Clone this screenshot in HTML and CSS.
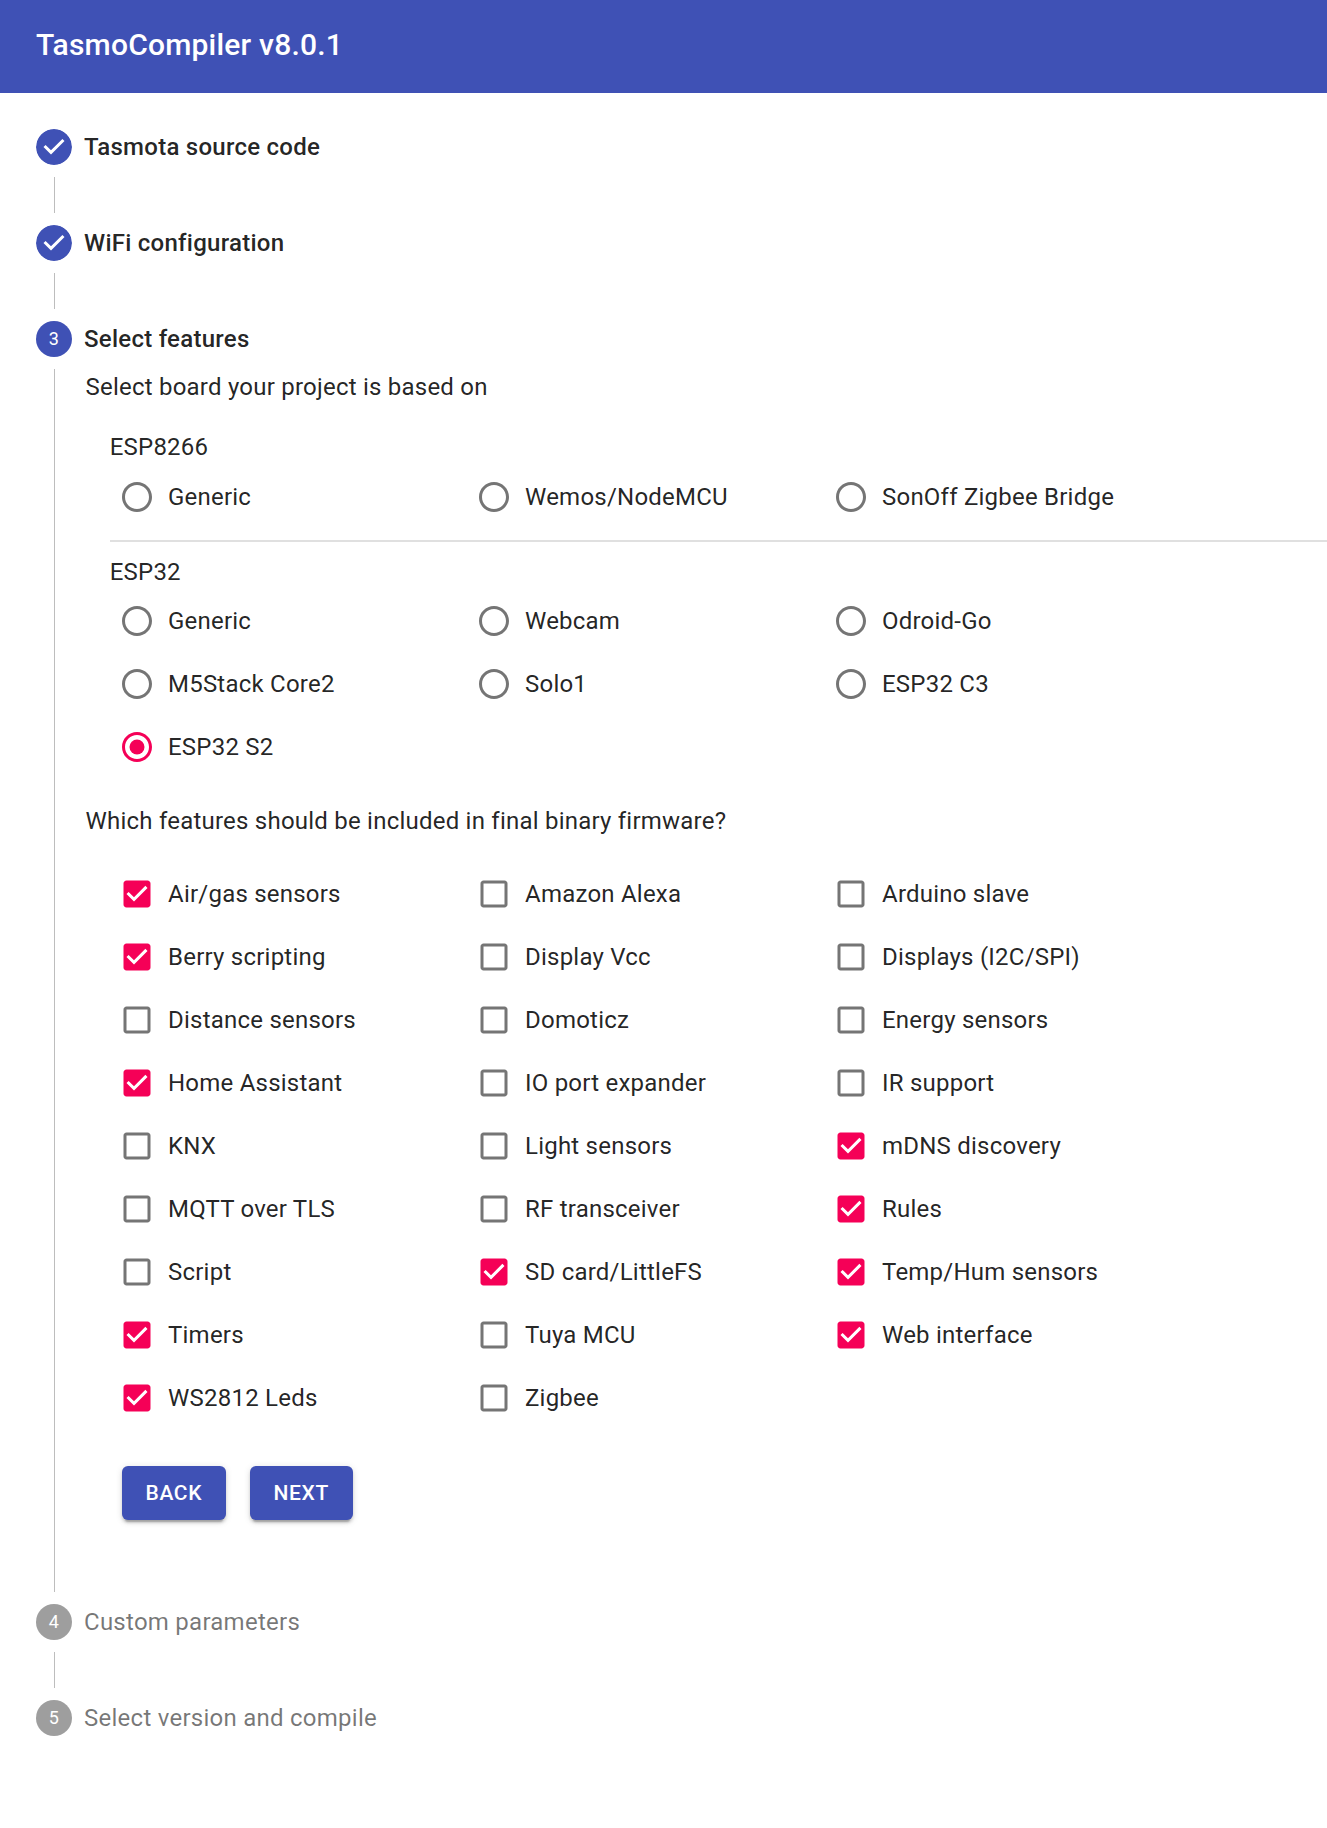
FILE: index.html
```html
<!DOCTYPE html>
<html lang="en">
<head>
<meta charset="utf-8">
<title>TasmoCompiler</title>
<link rel="stylesheet" href="styles.css">
</head>
<body>
<svg class="defs" aria-hidden="true">
  <symbol id="done" viewBox="0 0 24 24"><path d="M12 0a12 12 0 1 0 0 24 12 12 0 0 0 0-24zm-2 17l-5-5 1.4-1.4 3.6 3.6 7.6-7.6L19 8l-9 9z"/></symbol>
  <symbol id="radio" viewBox="0 0 24 24"><path d="M12 2C6.48 2 2 6.48 2 12s4.48 10 10 10 10-4.48 10-10S17.52 2 12 2zm0 18c-4.42 0-8-3.58-8-8s3.58-8 8-8 8 3.58 8 8-3.58 8-8 8z"/></symbol>
  <symbol id="radio-on" viewBox="0 0 24 24"><path d="M12 2C6.48 2 2 6.48 2 12s4.48 10 10 10 10-4.48 10-10S17.52 2 12 2zm0 18c-4.42 0-8-3.58-8-8s3.58-8 8-8 8 3.58 8 8-3.58 8-8 8z"/><circle cx="12" cy="12" r="5"/></symbol>
  <symbol id="box" viewBox="0 0 24 24"><path d="M19 5v14H5V5h14m0-2H5c-1.1 0-2 .9-2 2v14c0 1.1.9 2 2 2h14c1.1 0 2-.9 2-2V5c0-1.1-.9-2-2-2z"/></symbol>
  <symbol id="box-on" viewBox="0 0 24 24"><path d="M19 3H5c-1.11 0-2 .9-2 2v14c0 1.1.89 2 2 2h14c1.11 0 2-.9 2-2V5c0-1.1-.89-2-2-2zm-9 14l-5-5 1.41-1.41L10 14.17l7.59-7.59L19 8l-9 9z"/></symbol>
</svg>
<header class="app-bar"><h1 class="title">TasmoCompiler v8.0.1</h1></header>
<main class="stepper">
  <div class="step"><svg class="badge"><use href="#done"/></svg><span class="step-label">Tasmota source code</span></div>
  <div class="connector"></div>
  <div class="step"><svg class="badge"><use href="#done"/></svg><span class="step-label">WiFi configuration</span></div>
  <div class="connector"></div>
  <div class="step"><span class="badge number">3</span><span class="step-label">Select features</span></div>
  <section class="content">
    <p class="question">Select board your project is based on</p>
    <div class="boards">
      <h2 class="family">ESP8266</h2>
      <div class="options">
        <label class="option"><svg class="icon"><use href="#radio"/></svg>Generic</label>
        <label class="option"><svg class="icon"><use href="#radio"/></svg>Wemos/NodeMCU</label>
        <label class="option"><svg class="icon"><use href="#radio"/></svg>SonOff Zigbee Bridge</label>
      </div>
      <hr class="divider">
      <h2 class="family">ESP32</h2>
      <div class="options">
        <label class="option"><svg class="icon"><use href="#radio"/></svg>Generic</label>
        <label class="option"><svg class="icon"><use href="#radio"/></svg>Webcam</label>
        <label class="option"><svg class="icon"><use href="#radio"/></svg>Odroid-Go</label>
        <label class="option"><svg class="icon"><use href="#radio"/></svg>M5Stack Core2</label>
        <label class="option"><svg class="icon"><use href="#radio"/></svg>Solo1</label>
        <label class="option"><svg class="icon"><use href="#radio"/></svg>ESP32 C3</label>
        <label class="option"><svg class="icon on"><use href="#radio-on"/></svg>ESP32 S2</label>
      </div>
    </div>
    <p class="question">Which features should be included in final binary firmware?</p>
    <div class="features options">
      <label class="option"><svg class="icon on"><use href="#box-on"/></svg>Air/gas sensors</label>
      <label class="option"><svg class="icon"><use href="#box"/></svg>Amazon Alexa</label>
      <label class="option"><svg class="icon"><use href="#box"/></svg>Arduino slave</label>
      <label class="option"><svg class="icon on"><use href="#box-on"/></svg>Berry scripting</label>
      <label class="option"><svg class="icon"><use href="#box"/></svg>Display Vcc</label>
      <label class="option"><svg class="icon"><use href="#box"/></svg>Displays (I2C/SPI)</label>
      <label class="option"><svg class="icon"><use href="#box"/></svg>Distance sensors</label>
      <label class="option"><svg class="icon"><use href="#box"/></svg>Domoticz</label>
      <label class="option"><svg class="icon"><use href="#box"/></svg>Energy sensors</label>
      <label class="option"><svg class="icon on"><use href="#box-on"/></svg>Home Assistant</label>
      <label class="option"><svg class="icon"><use href="#box"/></svg>IO port expander</label>
      <label class="option"><svg class="icon"><use href="#box"/></svg>IR support</label>
      <label class="option"><svg class="icon"><use href="#box"/></svg>KNX</label>
      <label class="option"><svg class="icon"><use href="#box"/></svg>Light sensors</label>
      <label class="option"><svg class="icon on"><use href="#box-on"/></svg>mDNS discovery</label>
      <label class="option"><svg class="icon"><use href="#box"/></svg>MQTT over TLS</label>
      <label class="option"><svg class="icon"><use href="#box"/></svg>RF transceiver</label>
      <label class="option"><svg class="icon on"><use href="#box-on"/></svg>Rules</label>
      <label class="option"><svg class="icon"><use href="#box"/></svg>Script</label>
      <label class="option"><svg class="icon on"><use href="#box-on"/></svg>SD card/LittleFS</label>
      <label class="option"><svg class="icon on"><use href="#box-on"/></svg>Temp/Hum sensors</label>
      <label class="option"><svg class="icon on"><use href="#box-on"/></svg>Timers</label>
      <label class="option"><svg class="icon"><use href="#box"/></svg>Tuya MCU</label>
      <label class="option"><svg class="icon on"><use href="#box-on"/></svg>Web interface</label>
      <label class="option"><svg class="icon on"><use href="#box-on"/></svg>WS2812 Leds</label>
      <label class="option"><svg class="icon"><use href="#box"/></svg>Zigbee</label>
    </div>
    <div class="actions"><button class="button">Back</button><button class="button">Next</button></div>
  </section>
  <div class="step pending"><span class="badge number">4</span><span class="step-label">Custom parameters</span></div>
  <div class="connector"></div>
  <div class="step pending"><span class="badge number">5</span><span class="step-label">Select version and compile</span></div>
</main>
</body>
</html>
```
FILE: styles.css
```css
* { box-sizing: border-box; }
html { overflow: hidden; }
body {
  margin: 0;
  background: #fff;
  color: rgba(0, 0, 0, 0.87);
  font-family: Roboto, "Liberation Sans", sans-serif;
  font-size: 24px;
  line-height: 36px;
  letter-spacing: 0.225px;
}
h1, h2, p { margin: 0; font-weight: 400; }
.defs { display: none; }
.app-bar {
  height: 93px;
  padding: 20px 36px 0;
  background: #3f51b5;
  color: #fff;
}
.title {
  font-size: 30px;
  font-weight: 500;
  line-height: 49px;
  letter-spacing: 0.21px;
}
.stepper { padding: 36px 0 36px 36px; }
.step { display: flex; align-items: center; height: 36px; }
.badge {
  flex: none;
  width: 36px;
  height: 36px;
  margin-right: 12px;
  border-radius: 50%;
  fill: #3f51b5;
}
.number {
  background: #3f51b5;
  color: #fff;
  font-size: 18px;
  text-align: center;
}
.step-label { font-weight: 500; letter-spacing: 0.257px; }
.pending .number { background: #9e9e9e; }
.pending .step-label { color: rgba(0, 0, 0, 0.54); font-weight: 400; }
.connector {
  width: 1px;
  height: 36px;
  margin: 12px 0 12px 18px;
  background: #bdbdbd;
}
.content {
  height: 1223px;
  margin: 12px 0 12px 18px;
  padding-left: 30px;
  border-left: 1px solid #bdbdbd;
}
.question { padding-left: 0.5px; }
.boards { padding: 24px 0 24.5px 25px; }
.family { height: 36.5px; margin-left: -0.3px; font-size: 24px; }
.divider + .family { height: 36px; }
.options {
  display: grid;
  grid-template-columns: repeat(3, 357px);
  grid-auto-rows: 63px;
  padding-left: 9px;
}
.option { display: flex; align-items: center; }
.icon {
  flex: none;
  width: 36px;
  height: 36px;
  margin-right: 13px;
  fill: #757575;
}
.icon.on { fill: #f50057; }
.divider {
  height: 2px;
  margin: 11.5px 0;
  border: 0;
  background: #e0e0e0;
}
.features { padding: 23.5px 0 0 34px; }
.actions { display: flex; gap: 24px; padding: 36.5px 0 0 37px; }
.button {
  height: 54px;
  padding: 0 24px 0 23.6px;
  border: 0;
  border-radius: 6px;
  background: #3f51b5;
  color: #fff;
  font: 500 21px/36px Roboto, sans-serif;
  letter-spacing: 0.6px;
  text-transform: uppercase;
  box-shadow: 0 4.5px 1.5px -3px rgba(0, 0, 0, 0.2), 0 3px 3px rgba(0, 0, 0, 0.14), 0 1.5px 7.5px rgba(0, 0, 0, 0.12);
}
```
